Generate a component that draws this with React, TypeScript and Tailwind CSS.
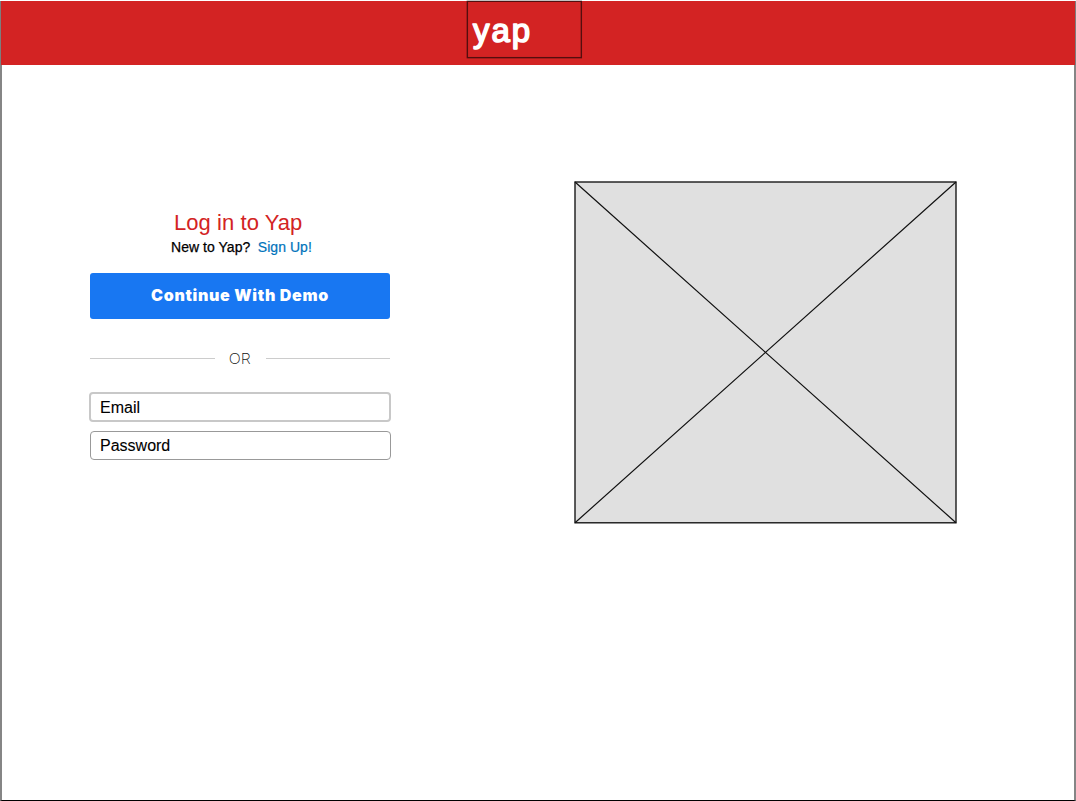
function Logo() {
  return (
    <svg
      className="-mt-px block h-[60px] w-[120px]"
      viewBox="0 0 120 60"
      aria-label="yap"
    >
      <rect x="3.35" y="1.3" width="114" height="56.35" fill="none" stroke="black" strokeOpacity="0.6" strokeWidth="1.4" />
      <text
        x="9"
        y="42"
        fontSize="33"
        letterSpacing="1.9"
        fill="white"
        stroke="white"
        strokeWidth="1.6"
        strokeLinejoin="round"
        fontFamily="'Liberation Sans', Arial, sans-serif"
      >
        yap
      </text>
    </svg>
  );
}

function Placeholder() {
  return (
    <svg className="block h-[345px] w-[384px]" viewBox="0 0 384 345">
      <rect x="2" y="2" width="381" height="340.8" fill="#e0e0e0" stroke="#111111" strokeWidth="1.35" />
      <path d="M2 2 383 342.8M383 2 2 342.8" fill="none" stroke="#111111" strokeWidth="1.2" />
    </svg>
  );
}

export default function App() {
  return (
    <div className="flex h-[801px] w-[1076px] flex-col overflow-hidden bg-white pt-px font-['Liberation_Sans',Arial,sans-serif] text-black">
      <header className="flex h-16 shrink-0 border-x border-[#7d7d7d] bg-[#d32323] pl-[463px]">
        <Logo />
      </header>
      <main className="flex flex-1 items-start border-x-2 border-b border-x-[#858585] border-b-black pl-[87px]">
        <section className="mt-[146px] flex w-[302px] flex-col">
          <h1 className="ml-[85px] h-6 text-[22px] leading-6 tracking-[0.06px] whitespace-nowrap text-[#d32323]">Log in to Yap</h1>
          <p className="ml-[82px] flex h-6 gap-[7.5px] text-[14px] leading-6 tracking-[0.04px] whitespace-nowrap">
            <span className="[-webkit-text-stroke:0.25px_black]">New to Yap?</span>
            <a className="text-[#0073bb] [-webkit-text-stroke:0.2px_#0073bb]">Sign Up!</a>
          </p>
          <button className="mt-[14px] ml-px h-[46px] w-[300px] rounded-[3px] bg-[#1877f2] pb-[3px] font-['Inter',sans-serif] text-[16px] font-black tracking-[0.68px] text-white">
            Continue With Demo
          </button>
          <div className="mt-[27px] ml-px flex h-6 w-[300px] items-center">
            <span className="h-px flex-1 bg-[#cccccc]" />
            <svg className="h-6 w-[51px]" viewBox="0 0 51 24">
              <text x="24.8" y="18" textAnchor="middle" textLength="22" lengthAdjust="spacingAndGlyphs" fontSize="15" fontWeight="200" fill="#111111" fontFamily="Inter, sans-serif">OR</text>
            </svg>
            <span className="h-px flex-1 bg-[#cccccc]" />
          </div>
          <div className="mt-[22px] flex h-[30px] items-center rounded-[4px] border-2 border-[#c8c8c8] px-[9px] pt-px text-[16px] [-webkit-text-stroke:0.1px_black]">Email</div>
          <div className="mt-[9px] ml-px flex h-[29px] items-center rounded-[4px] border border-[#999999] px-[9px] text-[16px] [-webkit-text-stroke:0.1px_black]">Password</div>
        </section>
        <div className="mt-[115px] ml-[182px]">
          <Placeholder />
        </div>
      </main>
    </div>
  );
}
